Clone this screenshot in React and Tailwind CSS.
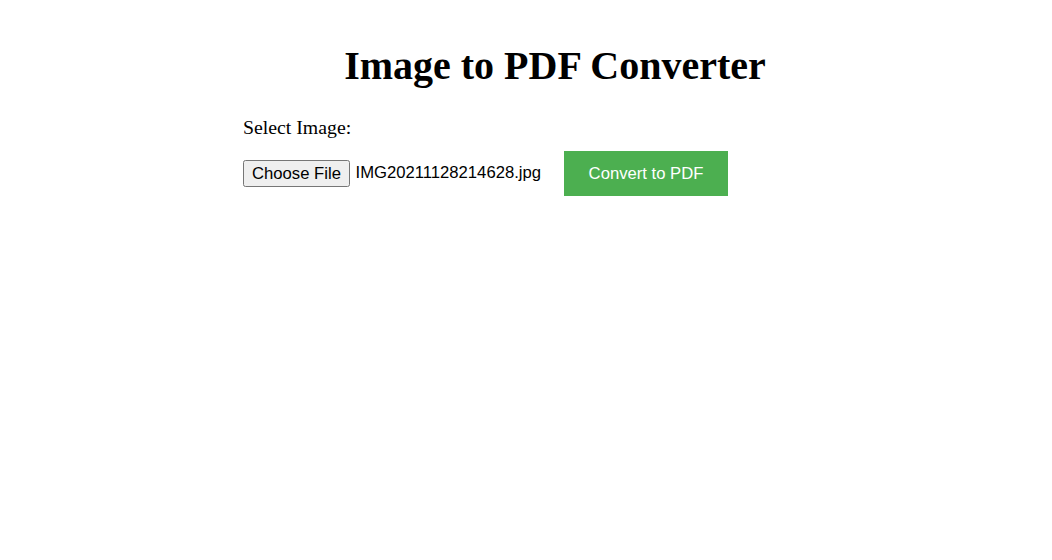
export default function App() {
  return (
    <main className="min-h-screen bg-white pl-[243px] pt-[42px] text-black">
      <h1 className="w-[624px] text-center font-['Liberation_Serif',serif] text-[40px] leading-[48px] font-bold">
        Image to PDF Converter
      </h1>
      <form className="pt-[25px]" onSubmit={(e) => e.preventDefault()}>
        <p className="font-['Liberation_Serif',serif] text-[19.8px] leading-[24px]">Select Image:</p>
        <div className="mt-[12px] flex h-[45px] items-center font-['Liberation_Sans',sans-serif] text-[16.67px] leading-[20px]">
          <button
            type="button"
            className="h-[27px] w-[107px] rounded-[2.5px] border border-[#767676] bg-[#efefef] whitespace-nowrap"
          >
            Choose File
          </button>
          <span className="ml-[5.5px] w-[208.5px] pb-[2px] whitespace-nowrap">IMG20211128214628.jpg</span>
          <button type="submit" className="h-[45px] w-[164px] bg-[#4caf50] text-white whitespace-nowrap">
            Convert to PDF
          </button>
        </div>
      </form>
    </main>
  );
}
